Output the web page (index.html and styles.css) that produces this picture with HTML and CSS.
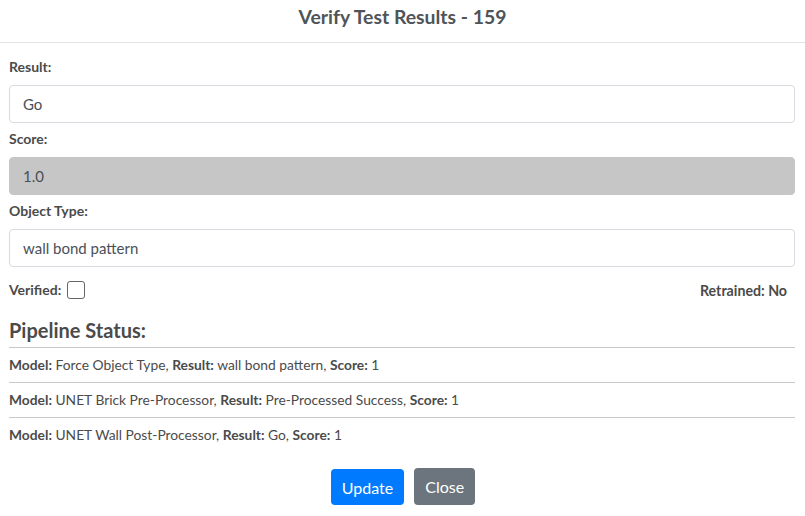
FILE: index.html
```html
<!DOCTYPE html>
<html>
<head>
<meta charset="utf-8">
<link rel="stylesheet" href="styles.css">
</head>
<body>
<div class="modal">
  <div class="modal-header">
    <h4 class="title">Verify Test Results - 159</h4>
  </div>
  <div class="modal-body">
    <div class="field">
      <label class="label">Result:</label>
      <div class="input">Go</div>
    </div>
    <div class="field">
      <label class="label">Score:</label>
      <div class="input disabled">1.0</div>
    </div>
    <div class="field">
      <label class="label">Object Type:</label>
      <div class="input">wall bond pattern</div>
    </div>
    <div class="flags">
      <div class="verified"><span class="label inline">Verified:</span><span class="checkbox"></span></div>
      <div class="retrained">Retrained: No</div>
    </div>
    <h5 class="pipeline">Pipeline Status:</h5>
    <div class="rows">
      <div class="row"><b>Model:</b> Force Object Type, <b>Result:</b> wall bond pattern, <b>Score:</b> 1</div>
      <div class="row"><b>Model:</b> UNET Brick Pre-Processor, <b>Result:</b> Pre-Processed Success, <b>Score:</b> 1</div>
      <div class="row"><b>Model:</b> UNET Wall Post-Processor, <b>Result:</b> Go, <b>Score:</b> 1</div>
    </div>
  </div>
  <div class="footer">
    <button class="btn primary">Update</button>
    <button class="btn secondary">Close</button>
  </div>
</div>
</body>
</html>
```
FILE: styles.css
```css
* { box-sizing: border-box; }
body {
  margin: 0;
  background: #fff;
  font-family: "Source Sans Pro", Lato, "Noto Sans", sans-serif;
  color: #495057;
}
.modal { width: 805px; }
.modal-header {
  height: 43px;
  border-bottom: 1px solid #e3e3e3;
  display: flex;
  justify-content: center;
  align-items: flex-start;
}
.title {
  margin: 5px 0 0;
  font-size: 19.4px;
  font-weight: 700;
  line-height: 24px;
  color: #4f5458;
}
.modal-body { padding: 16px 10px 0 9px; }
.field { margin-bottom: 8px; }
.label {
  display: block;
  font-size: 14px;
  font-weight: 700;
  line-height: 16px;
  margin-bottom: 10px;
  color: #4b4b4b;
}
.input {
  height: 38px;
  border: 1px solid #d8dce0;
  border-radius: 4px;
  padding: 0 13px;
  font-size: 15px;
  line-height: 36px;
  color: #495057;
}
.input.disabled { background: #c6c6c6; border-color: #c6c6c6; }
.flags {
  display: flex;
  justify-content: space-between;
  align-items: flex-end;
  margin-top: 14px;
}
.verified { display: flex; align-items: center; gap: 6px; }
.label.inline { margin: 0; display: inline; }
.checkbox {
  width: 18px; height: 18px;
  border: 1px solid #666;
  border-radius: 3px;
  display: inline-block;
}
.retrained {
  font-size: 14.2px;
  font-weight: 700;
  color: #4b4b4b;
  margin-right: 8px;
}
.pipeline {
  margin: 20px 0 6px;
  font-size: 20px;
  line-height: 22px;
  font-weight: 700;
  color: #4b4b4b;
}
.row {
  border-top: 1px solid #c8c8c8;
  font-size: 13.8px;
  line-height: 16px;
  padding: 9px 0 9px 0;
  color: #4b4b4b;
}
.row b { font-weight: 700; }
.footer {
  display: flex;
  justify-content: center;
  gap: 10px;
  margin-top: 16px;
  padding-left: 1px;
}
.btn {
  font-family: inherit;
  border: none;
  border-radius: 4px;
  font-size: 16px;
  height: 37px;
  padding: 0 11px;
  color: #fff;
}
.primary { background: #007bff; height: 36px; margin-top: 1px; }
.secondary { background: #6c757d; }
```
